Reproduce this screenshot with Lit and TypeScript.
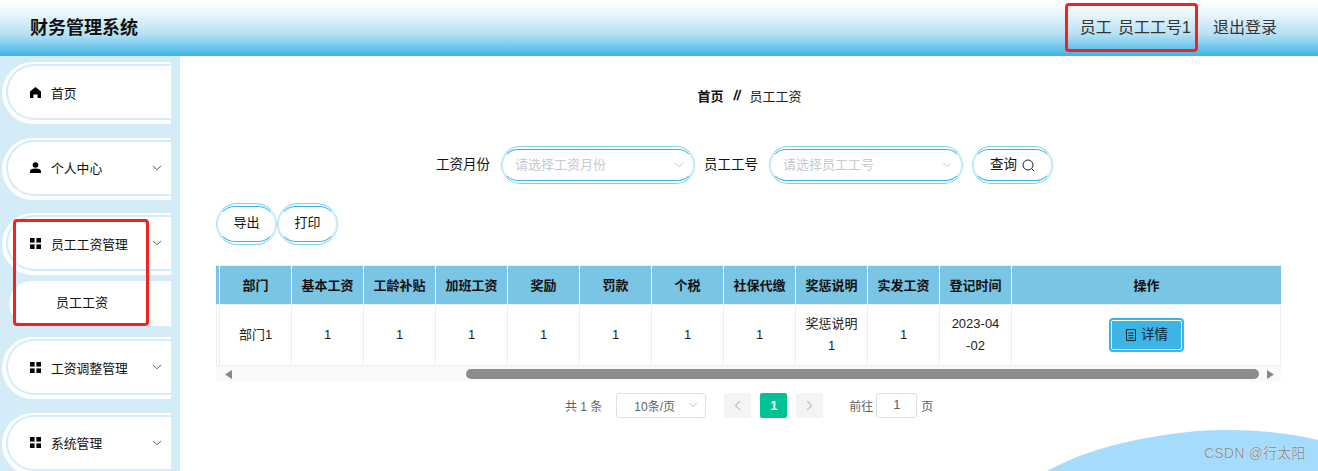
import { LitElement, html, css, svg } from "lit";
import { customElement } from "lit/decorators.js";

const chevron = html`<svg class="chev" width="10" height="6" viewBox="0 0 10 6"><path d="M1 .8 5 4.8 9 .8" fill="none" stroke="currentColor" stroke-width="1"/></svg>`;
const grid = svg`<rect x="0" y="0" width="4.6" height="4.6"/><rect x="6.4" y="0" width="4.6" height="4.6"/><rect x="0" y="6.4" width="4.6" height="4.6"/><rect x="6.4" y="6.4" width="4.6" height="4.6"/>`;
const home = svg`<path d="M5.5 0 11 4.6V11H7.6V7.6H3.4V11H0V4.6Z"/>`;
const user = svg`<circle cx="5.5" cy="3" r="2.8"/><path d="M0 11V9.2C0 7.4 2 6.6 5.5 6.6S11 7.4 11 9.2V11Z"/>`;

const heads = ["部门", "基本工资", "工龄补贴", "加班工资", "奖励", "罚款", "个税", "社保代缴", "奖惩说明", "实发工资", "登记时间"];

@customElement("app-root")
export class AppRoot extends LitElement {
  static styles = css`
    :host { display: block; position: relative; width: 1318px; height: 471px; overflow: hidden; background: #fff; color: #000;
      font-family: "Liberation Sans", "Noto Sans CJK SC", sans-serif; font-size: 13px; }
    * { box-sizing: border-box; }
    .header { height: 56px; display: flex; align-items: center; padding: 0 41px 0 30px;
      background: linear-gradient(180deg, #fff 0%, #eaf6fc 25%, #b4e0f4 62%, #3cb4e6 100%); }
    .title { font-size: 18px; font-weight: 700; color: #111; flex: 1; line-height: 56px; }
    .user { font-size: 16px; color: #333; line-height: 56px; word-spacing: 2px; }
    .logout { font-size: 16px; color: #333; margin-left: 22px; line-height: 56px; }
    .body { display: flex; height: 415px; }
    .side { width: 180px; flex: none; background: #d4ecf7; padding: 6px 9px 0 2px; overflow: hidden; font-size: 12.8px; }
    .item { height: 62px; margin-bottom: 13.5px; background: #fff; border-radius: 32px 0 0 32px; padding: 2px 0 4px 4px; }
    .item-in { height: 100%; border: 2px solid #d4ecf7; border-right: 0; border-radius: 28px 0 0 28px;
      display: flex; align-items: center; padding: 0 9px 0 22px; color: #111; }
    .item.open { margin-bottom: 6px; }
    .ico { width: 11px; height: 11px; flex: none; margin-right: 10px; fill: #000; }
    .label { flex: 1; }
    .chev { color: #555; flex: none; }
    .sub { height: 45px; margin: 0 0 11px 7px; background: #fff; border-radius: 23px 0 0 23px; padding-left: 47px; line-height: 43px; color: #111; font-size: 13px; }
    .main { flex: 1; padding: 0 37px 0 36px; min-width: 0; position: relative; }
    .crumb { display: flex; justify-content: center; align-items: center; height: 20px; margin-top: 30px; color: #222; padding: 0 0 2px 2px; }
    .crumb b { color: #111; }
    .crumb i { font-weight: 700; font-style: normal; font-size: 14px; margin: 0 6px 0 6px; color: #111; letter-spacing: -.5px; transform: skewX(-8deg); width: 14px; text-align: center; }
    .search { display: flex; align-items: center; height: 38px; margin-top: 40px; padding-left: 220px; color: #111; font-size: 13.5px; }
    .search > span { padding-bottom: 4px; }
    .pill { border: 1px solid #a6dff6; border-top-color: #7fd0f0; border-bottom-color: #7fd0f0; border-radius: 20px; padding: 2px 0; height: 38px; background: #fff; }
    .pill-in { height: 100%; border: 1px solid #cfeefa; border-top: 1.5px solid #3cb4e6; border-bottom: 1.5px solid #3cb4e6; border-radius: 17px;
      display: flex; align-items: center; justify-content: center; padding-bottom: 4px; }
    .sel { width: 194px; margin: 0 9px 0 11px; }
    .sel .pill-in { justify-content: space-between; padding: 0 9px 4px 12px; color: #c6c9d1; font-size: 13px; }
    .sel .chev { color: #c6c9d1; margin-top: 4px; }
    .btn { width: 81px; color: #111; }
    .q { margin-left: 5px; margin-top: 4px; }
    .tools { display: flex; margin-top: 19px; }
    .tool { width: 61px; height: 42px; color: #111; border-radius: 22px; }
    .tool .pill-in { border-radius: 20px; padding-bottom: 6px; }
    .table { width: 1065px; margin-top: 20px; display: grid; grid-template-columns: 4px repeat(11, 72px) 269px; border-top: 1px solid #ebeef5; }
    .th { height: 38px; background: #7ac4e4; border-right: 1px solid #fff; display: flex; align-items: center; justify-content: center; font-weight: 700; color: #111; padding-bottom: 1px; }
    .td { height: 62px; border-right: 1px solid #ebeef5; border-top: 1px solid #ebeef5; border-bottom: 1px solid #ebeef5; display: flex; align-items: center; justify-content: center; text-align: center; line-height: 22px; color: #222; }
    .th.last { border-right: 0; }
    .td.first { border-left: 1px solid #ebeef5; }
    .detail { width: 75px; height: 34px; background: #3cb4e6; border-radius: 4px; padding: 2px; }
    .detail-in { height: 100%; border: 1px solid #fff; border-radius: 2px; display: flex; align-items: center; justify-content: center; font-size: 13.5px; color: #123; gap: 5px; padding-left: 2px; }
    .scroll { width: 1065px; height: 16px; background: #fafafa; display: flex; align-items: center; padding: 0 7px 0 9px; }
    .arrow { flex: none; fill: #888; }
    .track { flex: 1; padding: 0 8px 0 234px; }
    .thumb { height: 10px; background: #8c8c8c; border-radius: 5px; }
    .pager { display: flex; align-items: center; height: 25px; margin-top: 11px; padding-left: 349px; color: #606266; font-size: 12px; }
    .psel { width: 90px; height: 25px; border: 1px solid #dcdfe6; border-radius: 3px; margin: 0 18px 0 14px; display: flex; align-items: center; justify-content: space-between; padding: 0 7px 1px 17px; background: #fff; }
    .psel .chev { color: #c0c4cc; }
    .pbtn { width: 27px; height: 25px; background: #f4f4f5; border-radius: 2px; margin-right: 9px; display: flex; align-items: center; justify-content: center; color: #c0c4cc; }
    .pbtn.on { background: #00c292; color: #fff; font-weight: 700; font-size: 13px; }
    .pbtn.next { margin-right: 26px; }
    .pager > span { padding-bottom: 1px; }
    .pin { width: 41px; height: 25px; border: 1px solid #dcdfe6; border-radius: 3px; margin: 0 4px 0 3px; display: flex; align-items: center; justify-content: center; font-size: 13px; padding-bottom: 2px; }
    .blob { position: absolute; right: 0; bottom: 0; display: block; }
    .mark { position: absolute; left: 1204px; top: 444px; font-size: 14px; color: #8a949c; letter-spacing: .2px; text-shadow: 0 0 1px #fff; line-height: 18px; white-space: nowrap; }
    .red { position: absolute; border: 3px solid #f5221b; border-radius: 4px; pointer-events: none; }
    .r1 { left: 1065px; top: 3px; width: 133px; height: 49px; }
    .r2 { left: 13px; top: 219px; width: 136px; height: 107px; }
  `;

  private navItem(icon: unknown, label: string, arrow = true, open = false) {
    return html`<div class="item ${open ? "open" : ""}"><div class="item-in">
      <svg class="ico" viewBox="0 0 11 11">${icon}</svg><span class="label">${label}</span>${arrow ? chevron : ""}
    </div></div>`;
  }

  render() {
    return html`
      <div class="header">
        <div class="title">财务管理系统</div>
        <div class="user">员工 员工工号1</div>
        <div class="logout">退出登录</div>
      </div>
      <div class="body">
        <nav class="side">
          ${this.navItem(home, "首页", false)}
          ${this.navItem(user, "个人中心")}
          ${this.navItem(grid, "员工工资管理", true, true)}
          <div class="sub">员工工资</div>
          ${this.navItem(grid, "工资调整管理")}
          ${this.navItem(grid, "系统管理")}
        </nav>
        <main class="main">
          <div class="crumb"><b>首页</b><i>//</i><span>员工工资</span></div>
          <div class="search">
            <span>工资月份</span>
            <div class="pill sel"><div class="pill-in"><span>请选择工资月份</span>${chevron}</div></div>
            <span>员工工号</span>
            <div class="pill sel"><div class="pill-in"><span>请选择员工工号</span>${chevron}</div></div>
            <div class="pill btn"><div class="pill-in">查询
              <svg class="q" width="13" height="13" viewBox="0 0 13 13"><circle cx="6" cy="6" r="5" fill="none" stroke="#223" stroke-width="1"/><path d="M9.6 9.6 12 12" stroke="#223" stroke-width="1"/></svg>
            </div></div>
          </div>
          <div class="tools">
            <div class="pill tool"><div class="pill-in">导出</div></div>
            <div class="pill tool"><div class="pill-in">打印</div></div>
          </div>
          <div class="table">
            <div class="th"></div>
            ${heads.map((h) => html`<div class="th">${h}</div>`)}
            <div class="th last">操作</div>
            <div class="td first"></div>
            <div class="td">部门1</div>
            <div class="td">1</div><div class="td">1</div><div class="td">1</div><div class="td">1</div><div class="td">1</div><div class="td">1</div><div class="td">1</div>
            <div class="td">奖惩说明<br />1</div>
            <div class="td">1</div>
            <div class="td">2023-04<br />-02</div>
            <div class="td">
              <div class="detail"><div class="detail-in">
                <svg width="10" height="12" viewBox="0 0 10 12"><path d="M.5.5h9v11h-9z" fill="none" stroke="#123" stroke-width="1"/><path d="M2.5 4h5M2.5 6.5h5M2.5 9h5" stroke="#123" stroke-width="1"/></svg>
                详情
              </div></div>
            </div>
          </div>
          <div class="scroll">
            <svg class="arrow" width="7" height="9" viewBox="0 0 7 9"><path d="M7 0v9L0 4.5z"/></svg>
            <div class="track"><div class="thumb"></div></div>
            <svg class="arrow" width="7" height="9" viewBox="0 0 7 9"><path d="M0 0v9l7-4.5z"/></svg>
          </div>
          <div class="pager">
            <span>共 1 条</span>
            <div class="psel"><span>10条/页</span>${chevron}</div>
            <div class="pbtn"><svg width="7" height="11" viewBox="0 0 7 11"><path d="M6 1 1.5 5.5 6 10" fill="none" stroke="currentColor" stroke-width="1.3"/></svg></div>
            <div class="pbtn on">1</div>
            <div class="pbtn next"><svg width="7" height="11" viewBox="0 0 7 11"><path d="M1 1l4.5 4.5L1 10" fill="none" stroke="currentColor" stroke-width="1.3"/></svg></div>
            <span>前往</span>
            <div class="pin">1</div>
            <span>页</span>
          </div>
        </main>
      </div>
      <svg class="blob" width="271" height="42" viewBox="0 0 271 42"><path d="M0 42C40 20 90 8 150 2 190 -1 235 2 271 11V42Z" fill="#a6dcfb"/></svg>
      <div class="mark">CSDN @行太阳</div>
      <div class="red r1"></div>
      <div class="red r2"></div>
    `;
  }
}
